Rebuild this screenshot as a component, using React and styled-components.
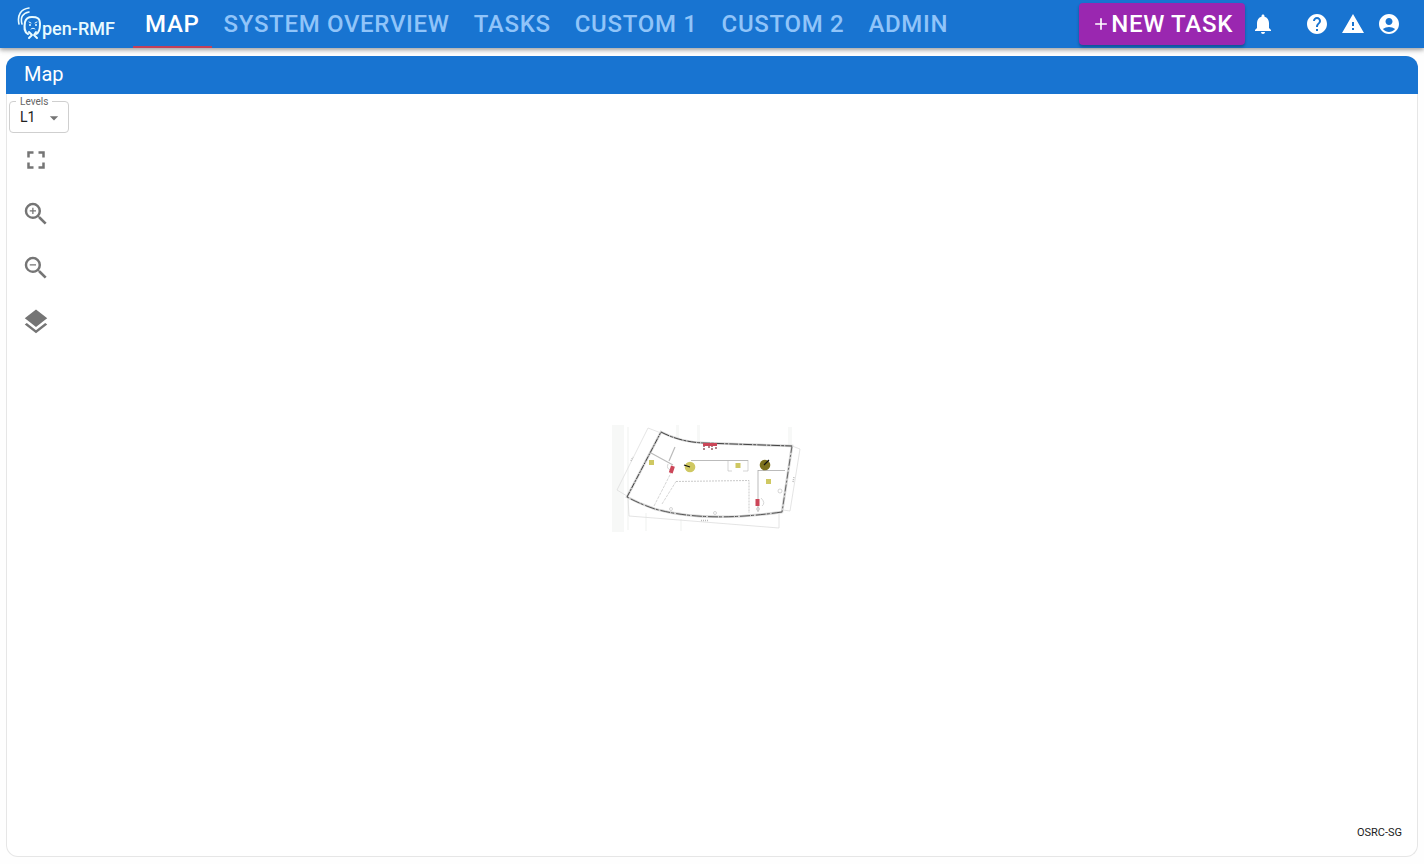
import React from 'react';
import styled, { createGlobalStyle } from 'styled-components';
import {
  MdNotifications,
  MdHelp,
  MdWarning,
  MdAccountCircle,
  MdAdd,
  MdFullscreen,
  MdZoomIn,
  MdZoomOut,
  MdLayers,
  MdArrowDropDown,
} from 'react-icons/md';

const GlobalStyle = createGlobalStyle`
  *, *::before, *::after { box-sizing: border-box; }
  body {
    margin: 0;
    background: #fefefe;
    font-family: Roboto, "Liberation Sans", sans-serif;
    color: #212121;
  }
`;

const Page = styled.div`
  display: flex;
  flex-direction: column;
  min-height: 100vh;
`;

const AppBar = styled.header`
  display: flex;
  align-items: center;
  height: 48px;
  padding: 0 17px;
  background: #1874d1;
  color: #fff;
  box-shadow: 0 2px 4px rgba(0, 0, 0, 0.3), 0 1px 8px rgba(0, 0, 0, 0.12);
`;

const LogoLink = styled.a`
  display: flex;
  width: 116px;
  flex: none;
`;

const Tabs = styled.nav`
  display: flex;
  align-self: stretch;
  flex: 1;
`;

const Tab = styled.a`
  display: flex;
  align-items: center;
  padding: 0 12px;
  box-shadow: ${({ $active }) => ($active ? 'inset 0 -2px #c2405a' : 'none')};
  color: ${({ $active }) => ($active ? '#fff' : '#90c4f9')};
  font-size: 24px;
  font-weight: 500;
  line-height: 30px;
  letter-spacing: 0.02857em;
  white-space: nowrap;
  text-decoration: none;
`;

const NewTaskButton = styled.button`
  display: flex;
  align-items: center;
  height: 42px;
  padding: 0 12px;
  border: 0;
  border-radius: 4px;
  background: #9a27b0;
  color: #fff;
  font: 500 24px/30px Roboto, "Liberation Sans", sans-serif;
  letter-spacing: 0.02857em;
  white-space: nowrap;
  box-shadow: 0 2px 3px rgba(0, 0, 0, 0.3);
`;

const IconGroup = styled.div`
  display: flex;
  margin-left: ${({ $gap }) => $gap || 0};
`;

const IconButton = styled.button`
  display: flex;
  padding: ${({ $pad }) => $pad};
  border: 0;
  background: none;
  color: inherit;
`;

const Panel = styled.main`
  display: flex;
  flex: 1;
  flex-direction: column;
  margin: 8px 6px 7px;
  border: 1px solid #e6e6e6;
  border-top: 0;
  border-radius: 12px;
  background: #fff;
`;

const PanelTitle = styled.h1`
  margin: 0 -1px;
  padding: 6px 18px 8px;
  border-radius: 12px 12px 0 0;
  background: #1874d1;
  color: #fff;
  font-size: 20px;
  font-weight: 400;
  line-height: 24px;
`;

const MapView = styled.div`
  display: grid;
  flex: 1;
  > * { grid-area: 1 / 1; }
`;

const Controls = styled.div`
  display: flex;
  flex-direction: column;
  align-items: flex-start;
  align-self: start;
  justify-self: start;
  padding: 7px 2px;
  color: #757575;
  z-index: 1;
`;

const LevelField = styled.div`
  position: relative;
  width: 60px;
  height: 32px;
  border: 1px solid #cfcfcf;
  border-radius: 4px;
  background: #fff;
`;

const LevelLabel = styled.label`
  position: absolute;
  top: -6px;
  left: 6px;
  padding: 0 4px;
  background: #fff;
  color: #666;
  font-size: 10px;
  line-height: 12px;
`;

const LevelSelect = styled.select`
  display: block;
  width: 100%;
  height: 30px;
  padding: 0 24px 0 10px;
  border: 0;
  background: transparent;
  appearance: none;
  color: #212121;
  font: 400 14px/20px Roboto, "Liberation Sans", sans-serif;
`;

const SelectArrow = styled(MdArrowDropDown)`
  position: absolute;
  top: 6px;
  right: 4px;
  pointer-events: none;
`;

const FloorPlan = styled.svg`
  align-self: center;
  justify-self: center;
`;

const Attribution = styled.p`
  align-self: end;
  justify-self: end;
  margin: 0;
  padding: 0 15px;
  font-size: 11px;
  line-height: 46px;
`;

const tabs = ['MAP', 'SYSTEM OVERVIEW', 'TASKS', 'CUSTOM 1', 'CUSTOM 2', 'ADMIN'];

const tools = [
  ['Fit to screen', MdFullscreen],
  ['Zoom in', MdZoomIn],
  ['Zoom out', MdZoomOut],
  ['Layers', MdLayers],
];

const accountActions = [
  ['Help', MdHelp],
  ['Report an issue', MdWarning],
  ['Profile', MdAccountCircle],
];

function Logo() {
  return (
    <svg width="100" height="44" viewBox="17 2 100 44" role="img" aria-label="Open-RMF">
      <g fill="none" stroke="#e8fbff" strokeWidth="2" strokeLinecap="round" strokeLinejoin="round">
        <path strokeWidth="1.600" d="M19 24C17 15 21 9 29 8" />
        <path strokeWidth="1.600" d="M22 24C20 17 23 13 29 12" />
        <path d="M28 34C24 32 24 28 25 22C26 18 28 17 32 17C37 17 40 18 40 24C40 30 39 33 36 34" />
        <path d="M29 32L32 35L29 38M36 32L34 35L37 38" />
        <path strokeWidth="1" d="M29 22L31 23M37 22L35 23M31 29C32 28 34 28 35 29" />
      </g>
      <circle cx="30" cy="25" r="1" fill="#e8fbff" />
      <circle cx="36" cy="25" r="1" fill="#e8fbff" />
      <text x="42" y="35" fill="#e8fbff" fontFamily="Roboto, sans-serif" fontWeight="500" fontSize="18">
        pen-RMF
      </text>
    </svg>
  );
}

function MapDrawing() {
  const outline = 'M661 432Q680 442 704 443L792 446L782 512Q706 523 655 509Q640 504 627 497Z';
  return (
    <FloorPlan width="240" height="140" viewBox="592 405 240 140" role="img" aria-label="Floor plan of level L1">
      <g fill="#f7f8f7">
        <rect x="612" y="425" width="12" height="107" />
        <rect x="627" y="427" width="2" height="103" />
        <rect x="676" y="425" width="3" height="16" />
        <rect x="697" y="425" width="3" height="17" />
        <rect x="788" y="427" width="4" height="18" />
        <rect x="645" y="513" width="2" height="18" />
        <rect x="680" y="519" width="2" height="12" />
      </g>
      <path d={outline} fill="#fff" stroke="#d4d4d4" strokeWidth="2.500" />
      <path d="M661 432Q680 442 704 443L792 446" fill="none" stroke="#444" strokeWidth="1" strokeDasharray="9 1 3 1" />
      <path d="M792 446L782 512" fill="none" stroke="#666" strokeWidth="1" strokeDasharray="7 2 2 2" />
      <path d="M782 512Q706 523 655 509Q640 504 627 497" fill="none" stroke="#555" strokeWidth="1" strokeDasharray="10 2 3 1" />
      <path d="M627 497L661 432" fill="none" stroke="#444" strokeWidth="1" strokeDasharray="6 1 2 1" />
      <g fill="none" stroke="#bbb">
        <path strokeWidth="1.2" d="M651 453L673 465M669 461L675 447" />
        <path stroke="#aaa" strokeWidth="0.8" d="M691 460.5H748M758 470.5H785M758 470V512" />
        <path strokeWidth="0.6" d="M728 460V471H732M743 471H748V460" />
        <path strokeWidth="0.6" strokeDasharray="3 1" d="M654 506L672 471M662 504L676 481.500" />
        <path strokeWidth="0.8" strokeDasharray="2 1" d="M676 481.5L749 480.5V513" />
        <path stroke="#ddd" strokeWidth="0.8" d="M648 428L617 490M648 428L661 433M617 490L627 496M628 498L629 516L779 528V514M792 446L800 449L790 511L783 510" />
        <path stroke="#ccc" strokeWidth="0.8" d="M668 464Q666 469 671 470M761 498Q766 503 762 506" />
        <circle cx="780" cy="491" r="2" strokeWidth="0.6" />
        <circle cx="758" cy="509" r="1.500" strokeWidth="0.6" />
        <circle cx="715" cy="513" r="1.500" strokeWidth="0.6" />
        <circle cx="671" cy="509" r="1.500" strokeWidth="0.6" />
        <path strokeWidth="1.5" strokeDasharray="1 1" d="M701 520.5H708M631 461L633 457M793 482L794 477" />
      </g>
      <g fill="#cfc862">
        <rect x="649" y="460" width="5" height="5" />
        <rect x="735.500" y="463" width="5" height="5" />
        <rect x="766" y="479" width="5" height="5" />
        <circle cx="690" cy="467" r="5.300" />
      </g>
      <circle cx="765" cy="465" r="5.300" fill="#7b701c" />
      <path d="M684 465L690 467M764 465L769 460" stroke="#111" strokeWidth="1.2" />
      <g fill="#cc4658">
        <rect x="670" y="466" width="4" height="7" transform="rotate(18 672 469)" />
        <rect x="755.500" y="499" width="4" height="7" />
        <rect x="703" y="443" width="14" height="3" />
      </g>
      <path d="M704 450V446M709 448V445M712 450V446M716 449V446" stroke="#7a3540" strokeWidth="1.200" strokeDasharray="2 1" />
    </FloorPlan>
  );
}

export default function App() {
  return (
    <Page>
      <GlobalStyle />
      <AppBar>
        <LogoLink href="#home"><Logo /></LogoLink>
        <Tabs>
          {tabs.map((name, i) => (
            <Tab key={name} href="#view" $active={i === 0}>{name}</Tab>
          ))}
        </Tabs>
        <NewTaskButton type="button"><MdAdd size={20} />NEW TASK</NewTaskButton>
        <IconGroup>
          <IconButton type="button" $pad="6px" aria-label="Notifications"><MdNotifications size={24} /></IconButton>
        </IconGroup>
        <IconGroup $gap="18px">
          {accountActions.map(([name, Icon]) => (
            <IconButton key={name} type="button" $pad="6px" aria-label={name}><Icon size={24} /></IconButton>
          ))}
        </IconGroup>
      </AppBar>
      <Panel>
        <PanelTitle>Map</PanelTitle>
        <MapView>
          <MapDrawing />
          <Controls>
            <LevelField>
              <LevelLabel htmlFor="level">Levels</LevelLabel>
              <LevelSelect id="level" defaultValue="L1"><option>L1</option></LevelSelect>
              <SelectArrow size={20} />
            </LevelField>
            {tools.map(([name, Icon]) => (
              <IconButton key={name} type="button" $pad="12px" aria-label={name}><Icon size={30} /></IconButton>
            ))}
          </Controls>
          <Attribution>OSRC-SG</Attribution>
        </MapView>
      </Panel>
    </Page>
  );
}
